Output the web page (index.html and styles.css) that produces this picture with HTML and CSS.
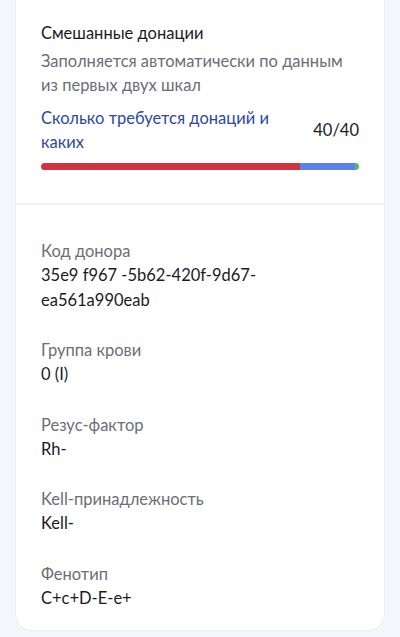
FILE: index.html
```html
<!DOCTYPE html>
<html lang="ru">
<head>
<meta charset="utf-8">
<link rel="stylesheet" href="styles.css">
</head>
<body>
<div class="page">
  <div class="card">
    <section class="summary">
      <h2 class="title">Смешанные донации</h2>
      <p class="desc">Заполняется автоматически по данным из первых двух шкал</p>
      <div class="progress-head">
        <a class="link">Сколько требуется донаций и каких</a>
        <span class="count">40/40</span>
      </div>
      <div class="bar">
        <span class="seg red" style="width:81.5%"></span>
        <span class="seg blue" style="width:17.3%"></span>
        <span class="seg green" style="width:1.2%"></span>
      </div>
    </section>
    <section class="details">
      <div class="field">
        <div class="label">Код донора</div>
        <div class="value">35e9 f967 -5b62-420f-9d67-<br>ea561a990eab</div>
      </div>
      <div class="field">
        <div class="label">Группа крови</div>
        <div class="value">0 (I)</div>
      </div>
      <div class="field">
        <div class="label">Резус-фактор</div>
        <div class="value">Rh-</div>
      </div>
      <div class="field">
        <div class="label">Kell-принадлежность</div>
        <div class="value">Kell-</div>
      </div>
      <div class="field">
        <div class="label">Фенотип</div>
        <div class="value">C+c+D-E-e+</div>
      </div>
    </section>
  </div>
</div>
</body>
</html>
```
FILE: styles.css
```css
html, body {
  margin: 0;
  padding: 0;
  background: #f4f6fb;
}
body {
  font-family: Lato, "Noto Sans", sans-serif;
  color: #1b1b1f;
  font-size: 16.5px;
}
.page {
  padding: 0 16px 9px;
}
.card {
  background: #fff;
  border-radius: 0 0 16px 16px;
  box-shadow: 0 0 0 1px #eceff7;
  overflow: hidden;
}
.summary {
  padding: 21px 25px 33px;
  border-bottom: 2px solid #eef0f6;
}
.title {
  margin: 0;
  font-size: 16.5px;
  line-height: 24px;
  font-weight: 400;
  color: #1b1b1f;
}
.desc {
  margin: 4px 0 0;
  font-size: 16.5px;
  line-height: 24px;
  color: #6b6e76;
}
.progress-head {
  display: flex;
  justify-content: space-between;
  align-items: center;
  gap: 24px;
  margin-top: 9px;
}
.link {
  font-size: 16.5px;
  line-height: 24px;
  color: #2b4a9f;
  max-width: 240px;
}
.count {
  font-size: 16.5px;
  line-height: 24px;
  color: #1b1b1f;
}
.bar {
  display: flex;
  height: 7px;
  border-radius: 4px;
  overflow: hidden;
  margin-top: 9px;
}
.seg { display: block; height: 100%; }
.red { background: #d0343f; }
.blue { background: #5b82e8; }
.green { background: #5bb46a; }
.details {
  padding: 34px 25px 20px;
  display: flex;
  flex-direction: column;
  gap: 26px;
}
.label {
  font-size: 16.5px;
  line-height: 24px;
  color: #6b6e76;
}
.value {
  font-size: 16.5px;
  line-height: 24.5px;
  color: #1b1b1f;
}
```
